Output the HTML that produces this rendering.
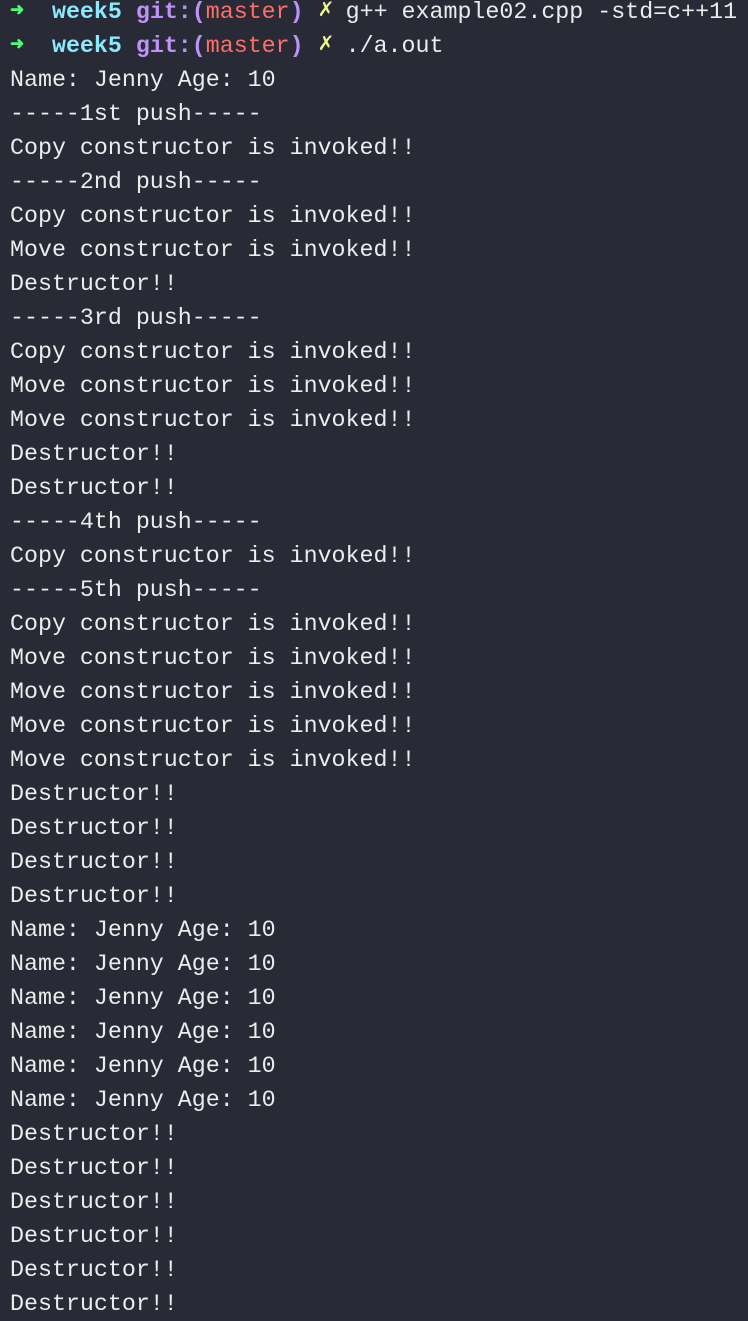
<!DOCTYPE html>
<html><head><style>
html,body{margin:0;padding:0;background:#282a36;width:748px;height:1316px;overflow:hidden}
#t{position:absolute;top:-5px;left:10px;font-family:"Liberation Mono",monospace;font-size:23.3px;color:#ececec;white-space:pre}
#t div{height:34px;line-height:34px}
.w{display:inline-block;width:14px;height:34px;line-height:34px;vertical-align:top;text-align:center}
.g{color:#50fa7b;font-size:17px;font-weight:bold}.c{color:#8be9fd;font-weight:bold}.p{color:#bd93f9;font-weight:bold}.r{color:#ff6e67;font-weight:normal}.y{color:#f1fa8c;font-size:20px}
</style></head><body><div id="t"><div><span class="w g">➜</span>  <span class="c">week5</span> <span class="p">git:(<span class="r">master</span>)</span> <span class="w y">✗</span> g++ example02.cpp -std=c++11</div><div><span class="w g">➜</span>  <span class="c">week5</span> <span class="p">git:(<span class="r">master</span>)</span> <span class="w y">✗</span> ./a.out</div><div>Name: Jenny Age: 10</div><div>-----1st push-----</div><div>Copy constructor is invoked!!</div><div>-----2nd push-----</div><div>Copy constructor is invoked!!</div><div>Move constructor is invoked!!</div><div>Destructor!!</div><div>-----3rd push-----</div><div>Copy constructor is invoked!!</div><div>Move constructor is invoked!!</div><div>Move constructor is invoked!!</div><div>Destructor!!</div><div>Destructor!!</div><div>-----4th push-----</div><div>Copy constructor is invoked!!</div><div>-----5th push-----</div><div>Copy constructor is invoked!!</div><div>Move constructor is invoked!!</div><div>Move constructor is invoked!!</div><div>Move constructor is invoked!!</div><div>Move constructor is invoked!!</div><div>Destructor!!</div><div>Destructor!!</div><div>Destructor!!</div><div>Destructor!!</div><div>Name: Jenny Age: 10</div><div>Name: Jenny Age: 10</div><div>Name: Jenny Age: 10</div><div>Name: Jenny Age: 10</div><div>Name: Jenny Age: 10</div><div>Name: Jenny Age: 10</div><div>Destructor!!</div><div>Destructor!!</div><div>Destructor!!</div><div>Destructor!!</div><div>Destructor!!</div><div>Destructor!!</div></div></body></html>
